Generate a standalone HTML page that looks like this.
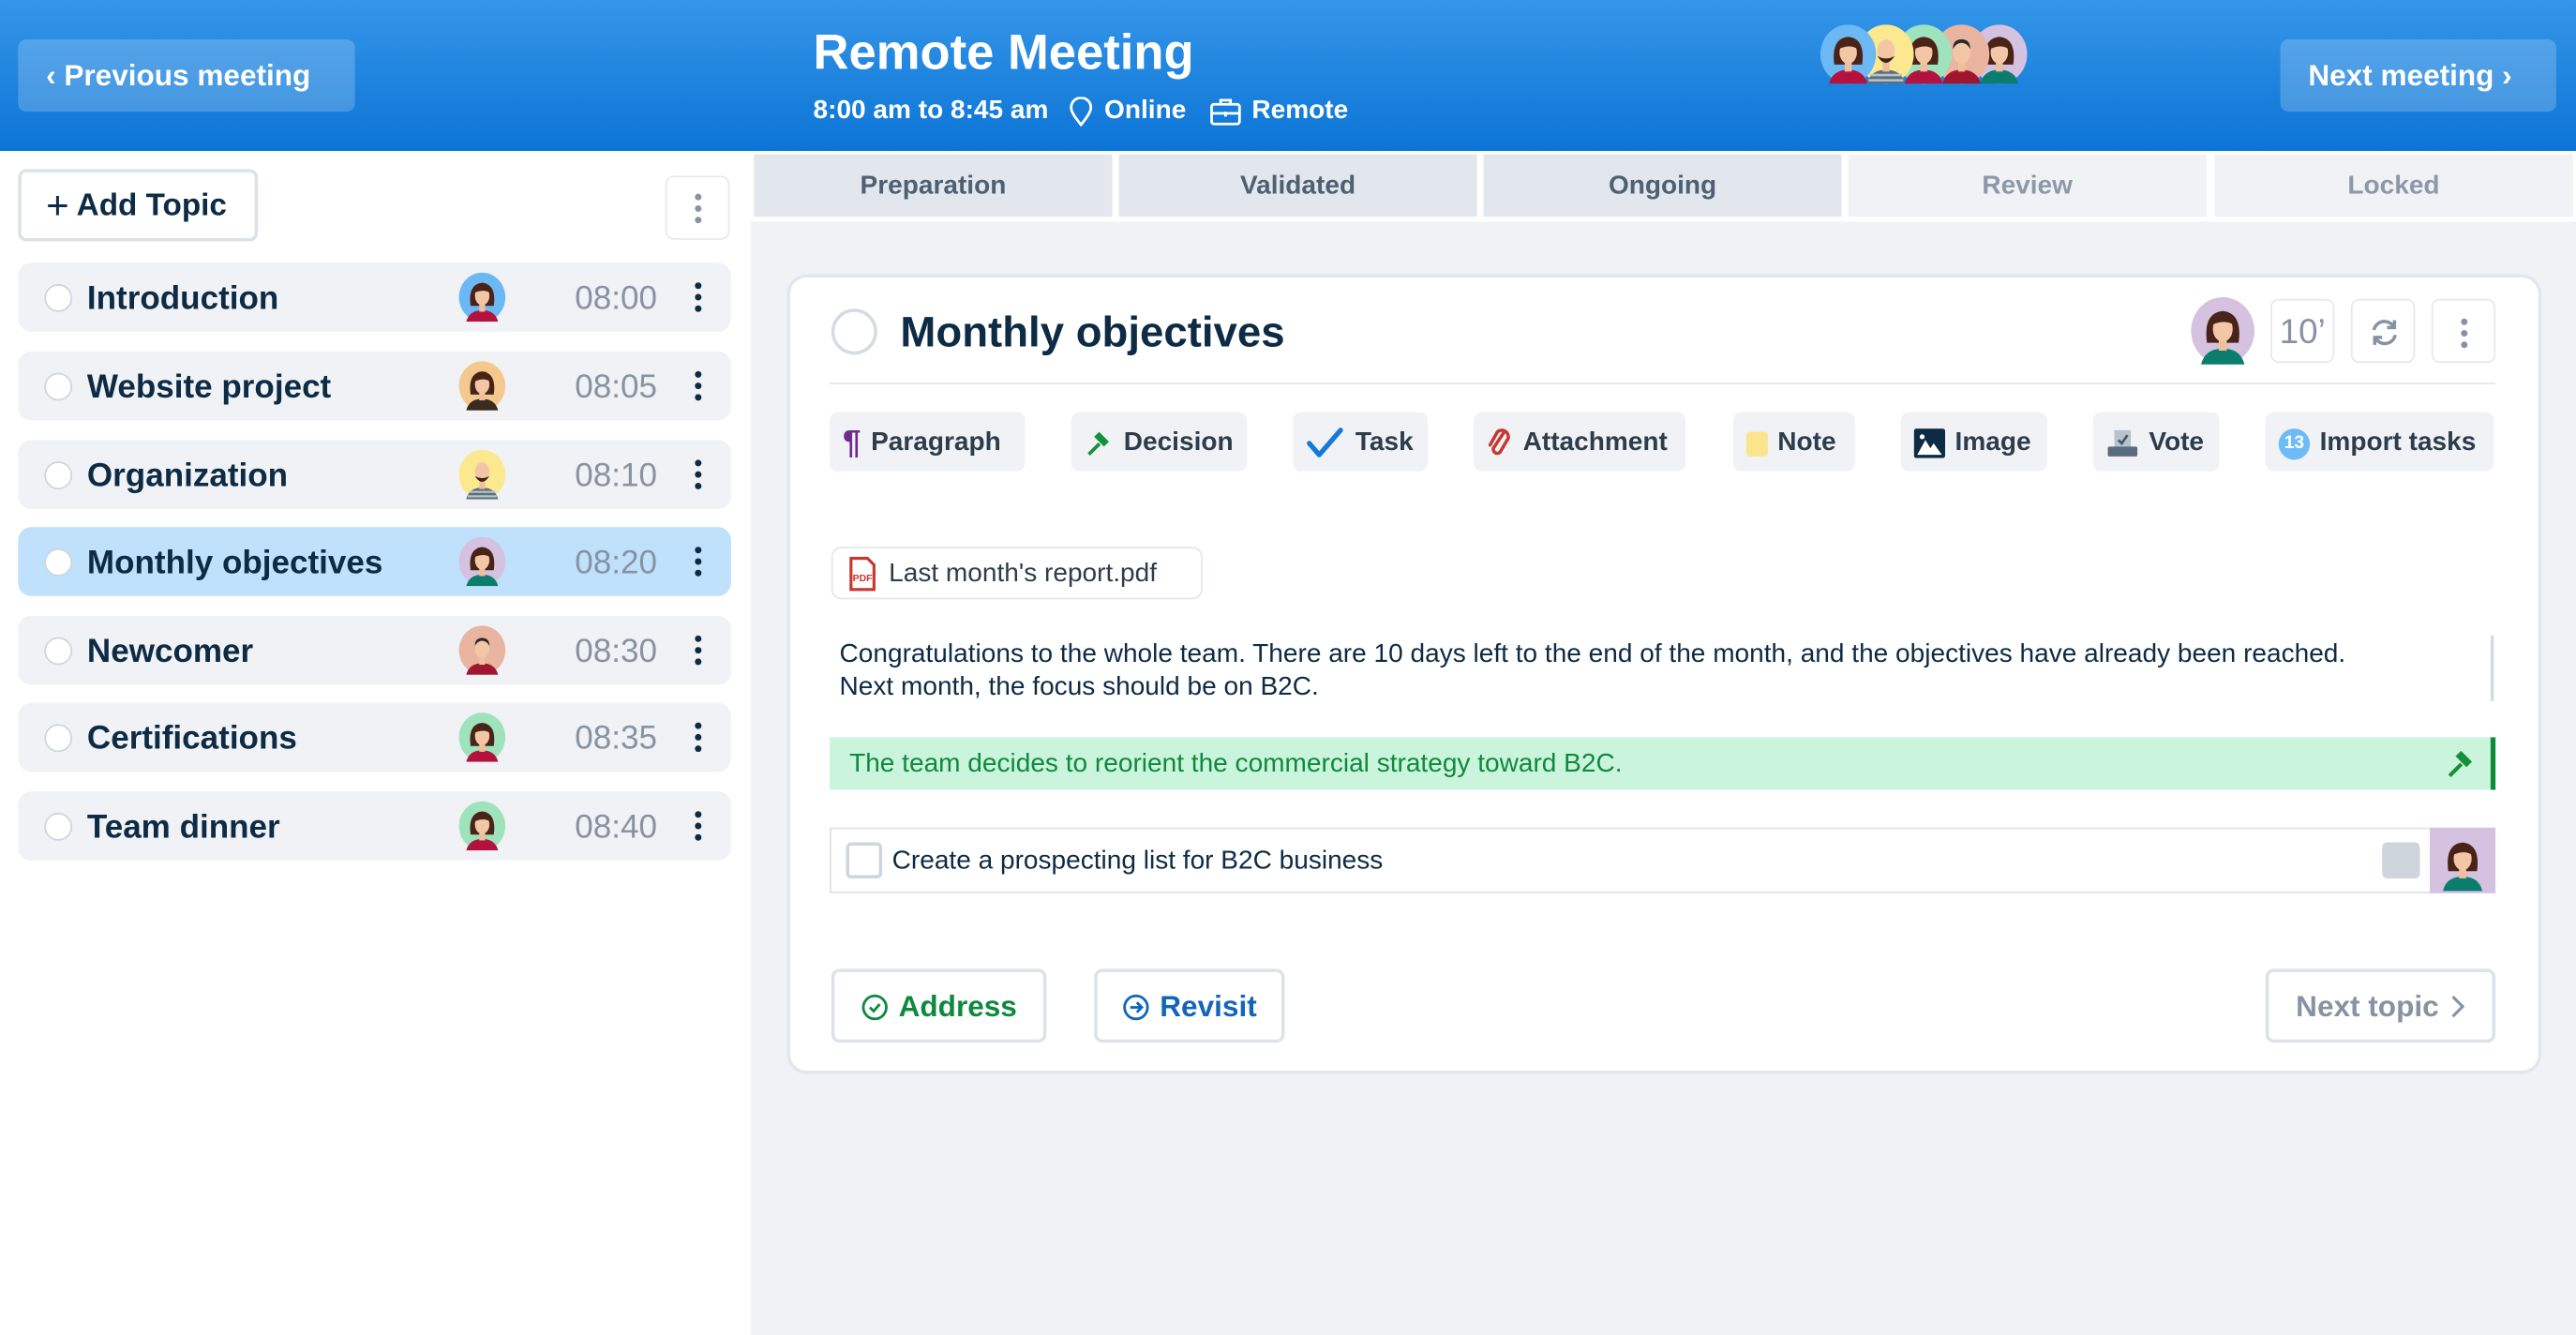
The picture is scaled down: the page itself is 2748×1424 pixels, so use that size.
<!DOCTYPE html>
<html><head><meta charset="utf-8"><style>
*{box-sizing:border-box;margin:0;padding:0}
html,body{width:2748px;height:1424px;overflow:hidden;background:#fff}
body{font-family:"Liberation Sans",Arial,sans-serif}
#w{position:absolute;left:0;top:0;width:1568px;height:813px;transform:scale(1.75255,1.7515);transform-origin:0 0;background:#fff}
.a{position:absolute}
.hdr{left:0;top:0;width:1568px;height:92px;background:linear-gradient(#3596e8,#0b74d6)}
.hb{top:24px;height:44px;background:rgba(255,255,255,.2);border-radius:5px;color:#fff;font-weight:bold;font-size:18px;line-height:45px}
.side{left:0;top:92px;width:457px;height:721px;background:#fff}
.main{left:457px;top:92px;width:1111px;height:721px;background:#f0f2f5}
.row{left:11px;width:434px;height:42px;background:#f0f2f5;border-radius:8px}
.row .c{position:absolute;left:16px;top:13px;width:17px;height:17px;border-radius:50%;border:1.5px solid #cfd5dd;background:#fff}
.row .t{position:absolute;left:42px;top:1px;line-height:42px;font-size:20px;font-weight:bold;color:#0d2b45}
.row .tm{position:absolute;right:45px;top:1px;line-height:42px;font-size:20px;color:#8793a3}
.row svg.av{position:absolute;left:268px;top:6px;width:29px;height:30px}
.dots{position:absolute;width:4px}
.dots i{display:block;width:4px;height:4px;border-radius:50%;background:#0d2b45;margin-bottom:3px}
.row .dots{left:412px;top:12px}
.tab{top:94px;height:38px;line-height:39px;text-align:center;font-size:16px;font-weight:bold}
.card{left:479px;top:167px;width:1068px;height:487px;background:#fff;border:2px solid #e2e7ee;border-radius:12px}
.tb{top:251px;height:36px;background:#f0f2f5;border-radius:5px;font-size:16px;font-weight:bold;color:#2e3c4b;line-height:36px;display:flex;align-items:center;padding-left:8px;padding-top:2px;gap:6px}
.sq{top:182px;width:39px;height:39px;border:1px solid #e5e9ee;border-radius:5px;background:#fff;color:#8793a3}
.btn{top:590px;height:45px;border:2px solid #dde2e8;border-radius:5px;background:#fff;font-size:18px;font-weight:bold;line-height:41px;display:flex;align-items:center;justify-content:center;gap:6px;padding-top:1px}
</style></head><body>
<svg width="0" height="0" style="position:absolute">
<defs>
<symbol id="fem" viewBox="0 0 32 32"><path d="M8 22 Q6 7 16 6 Q26 7 24 22Z" fill="#4a2318"/><path d="M5 33 Q7 25 16 25 Q25 25 27 33Z" fill="currentColor"/><rect x="14" y="20" width="4" height="6" fill="#f0bf9c"/><ellipse cx="16" cy="15" rx="5" ry="6.5" fill="#f3c7a5"/><path d="M10.5 13 Q12 7 16 7.5 Q21 8 21.5 13 Q17 10 10.5 13Z" fill="#4a2318"/></symbol>
<symbol id="mal" viewBox="0 0 32 32"><path d="M5 33 Q7 25 16 25 Q25 25 27 33Z" fill="currentColor"/><rect x="14" y="20" width="4" height="6" fill="#f0bf9c"/><ellipse cx="16" cy="15" rx="5" ry="6.5" fill="#f3c7a5"/><path d="M11 13 Q11 7.5 16 7.5 Q21 7.5 21 13 Q19 9.5 16 9.5 Q13 9.5 11 13Z" fill="#2a2a2a"/></symbol>
<symbol id="bald" viewBox="0 0 32 32"><path d="M5 33 Q7 25 16 25 Q25 25 27 33Z" fill="#5c6f7a"/><path d="M7 28 H25 M6 31 H26" stroke="#b8c4cc" stroke-width="1.4"/><rect x="14" y="20" width="4" height="6" fill="#f0bf9c"/><ellipse cx="16" cy="14" rx="5" ry="6.5" fill="#f3c7a5"/><path d="M11 17 Q16 25 21 17 Q16 20 11 17Z" fill="#3a2418"/></symbol>
</defs></svg>
<div id="w">
<div class="a hdr"></div>
<div class="a hb" style="left:11px;width:205px;padding-left:17px">&#8249;&nbsp;Previous meeting</div>
<div class="a" style="left:495px;top:16px;color:#fff;font-size:30px;font-weight:bold">Remote Meeting</div>
<div class="a" style="left:495px;top:59px;color:#fff;font-size:16px;font-weight:bold;display:flex;align-items:center;gap:6px">8:00 am to 8:45 am
<svg width="16" height="18" viewBox="0 0 16 18" style="margin-left:6px"><path d="M8 17 C4 12 2 9 2 6.5 A6 6 0 0 1 14 6.5 C14 9 12 12 8 17Z" fill="none" stroke="#fff" stroke-width="1.6"/></svg>Online
<svg width="20" height="18" viewBox="0 0 20 18" style="margin-left:8px"><rect x="1.5" y="4.5" width="17" height="12" rx="1.5" fill="none" stroke="#fff" stroke-width="1.6"/><path d="M7 4.5V2h6v2.5M1.5 10h17M10 9v3" stroke="#fff" stroke-width="1.6" fill="none"/></svg>Remote</div>
<div class="a" style="left:1108px;top:15px;width:130px;height:36px">
<svg class="a" style="left:0;top:0;z-index:5" width="34" height="36" viewBox="0 0 32 34"><ellipse cx="16" cy="17" rx="16" ry="17" fill="#6cb8f5"/><use href="#fem" width="32" height="34" style="color:#b3123f"/></svg>
<svg class="a" style="left:23px;top:0;z-index:4" width="34" height="36" viewBox="0 0 32 34"><ellipse cx="16" cy="17" rx="16" ry="17" fill="#fbe88f"/><use href="#bald" width="32" height="34"/></svg>
<svg class="a" style="left:46px;top:0;z-index:3" width="34" height="36" viewBox="0 0 32 34"><ellipse cx="16" cy="17" rx="16" ry="17" fill="#9fe3bd"/><use href="#fem" width="32" height="34" style="color:#b3123f"/></svg>
<svg class="a" style="left:69px;top:0;z-index:2" width="34" height="36" viewBox="0 0 32 34"><ellipse cx="16" cy="17" rx="16" ry="17" fill="#e9b5a1"/><use href="#mal" width="32" height="34" style="color:#a0162e"/></svg>
<svg class="a" style="left:92px;top:0;z-index:1" width="34" height="36" viewBox="0 0 32 34"><ellipse cx="16" cy="17" rx="16" ry="17" fill="#d5c1e0"/><use href="#fem" width="32" height="34" style="color:#0b7d6c"/></svg>
</div>
<div class="a hb" style="left:1388px;width:168px;padding-left:17px">Next meeting&nbsp;&#8250;</div>

<div class="a side"></div>
<div class="a" style="left:11px;top:103px;width:146px;height:44px;border:2px solid #dde2e8;border-radius:5px;font-size:19px;font-weight:bold;color:#0d2b45;line-height:42px;padding-left:15px"><span style="font-size:24px;font-weight:normal;vertical-align:-2px">+</span> Add Topic</div>
<div class="a" style="left:405px;top:107px;width:39px;height:39px;border:1px solid #e5e9ee;border-radius:5px"><div class="dots" style="left:17px;top:10px"><i style="background:#8793a3"></i><i style="background:#8793a3"></i><i style="background:#8793a3"></i></div></div>

<div class="a row" style="top:160px"><div class="c"></div><div class="t">Introduction</div><svg class="av" viewBox="0 0 32 34"><ellipse cx="16" cy="17" rx="16" ry="17" fill="#6cb8f5"/><use href="#fem" width="32" height="34" style="color:#b3123f"/></svg><div class="tm">08:00</div><div class="dots"><i></i><i></i><i></i></div></div>
<div class="a row" style="top:214px"><div class="c"></div><div class="t">Website project</div><svg class="av" viewBox="0 0 32 34"><ellipse cx="16" cy="17" rx="16" ry="17" fill="#f5c98e"/><use href="#fem" width="32" height="34" style="color:#3b2a22"/></svg><div class="tm">08:05</div><div class="dots"><i></i><i></i><i></i></div></div>
<div class="a row" style="top:268px"><div class="c"></div><div class="t">Organization</div><svg class="av" viewBox="0 0 32 34"><ellipse cx="16" cy="17" rx="16" ry="17" fill="#fbe88f"/><use href="#bald" width="32" height="34"/></svg><div class="tm">08:10</div><div class="dots"><i></i><i></i><i></i></div></div>
<div class="a row" style="top:321px;background:#bfe1fc"><div class="c"></div><div class="t">Monthly objectives</div><svg class="av" viewBox="0 0 32 34"><ellipse cx="16" cy="17" rx="16" ry="17" fill="#d5c1e0"/><use href="#fem" width="32" height="34" style="color:#0b7d6c"/></svg><div class="tm">08:20</div><div class="dots"><i></i><i></i><i></i></div></div>
<div class="a row" style="top:375px"><div class="c"></div><div class="t">Newcomer</div><svg class="av" viewBox="0 0 32 34"><ellipse cx="16" cy="17" rx="16" ry="17" fill="#e9b5a1"/><use href="#mal" width="32" height="34" style="color:#a0162e"/></svg><div class="tm">08:30</div><div class="dots"><i></i><i></i><i></i></div></div>
<div class="a row" style="top:428px"><div class="c"></div><div class="t">Certifications</div><svg class="av" viewBox="0 0 32 34"><ellipse cx="16" cy="17" rx="16" ry="17" fill="#9fe3bd"/><use href="#fem" width="32" height="34" style="color:#b3123f"/></svg><div class="tm">08:35</div><div class="dots"><i></i><i></i><i></i></div></div>
<div class="a row" style="top:482px"><div class="c"></div><div class="t">Team dinner</div><svg class="av" viewBox="0 0 32 34"><ellipse cx="16" cy="17" rx="16" ry="17" fill="#9fe3bd"/><use href="#fem" width="32" height="34" style="color:#b3123f"/></svg><div class="tm">08:40</div><div class="dots"><i></i><i></i><i></i></div></div>

<div class="a main"></div>
<div class="a" style="left:457px;top:92px;width:1111px;height:43px;background:#fff"></div>
<div class="a tab" style="left:459px;width:218px;background:#e2e7ee;color:#4f6070">Preparation</div>
<div class="a tab" style="left:681px;width:218px;background:#e2e7ee;color:#4f6070">Validated</div>
<div class="a tab" style="left:903px;width:218px;background:#e2e7ee;color:#4f6070">Ongoing</div>
<div class="a tab" style="left:1125px;width:218px;background:#f0f2f5;color:#8d99a8">Review</div>
<div class="a tab" style="left:1348px;width:218px;background:#f0f2f5;color:#8d99a8">Locked</div>

<div class="a card"></div>
<div class="a" style="left:506px;top:188px;width:28px;height:28px;border-radius:50%;border:2px solid #d5dbe2"></div>
<div class="a" style="left:548px;top:187px;font-size:26px;font-weight:bold;color:#0d2b45">Monthly objectives</div>
<svg class="a" style="left:1333px;top:181px" width="40" height="41" viewBox="0 0 32 34"><ellipse cx="16" cy="17" rx="16" ry="17" fill="#d5c1e0"/><use href="#fem" width="32" height="34" style="color:#0b7d6c"/></svg>
<div class="a sq" style="left:1382px;font-size:21px;line-height:39px;text-align:center">10&#8217;</div>
<div class="a sq" style="left:1431px"><svg width="39" height="39" viewBox="0 0 39 39"><path d="M13 18 A6.5 6.5 0 0 1 25 16 M26 21 A6.5 6.5 0 0 1 14 23" fill="none" stroke="#8793a3" stroke-width="2"/><path d="M25.5 12 V16.5 H21 M13.5 27 V22.5 H18" fill="none" stroke="#8793a3" stroke-width="2"/></svg></div>
<div class="a sq" style="left:1480px"><div class="dots" style="left:17px;top:11px"><i style="background:#8793a3"></i><i style="background:#8793a3"></i><i style="background:#8793a3"></i></div></div>
<div class="a" style="left:505px;top:233px;width:1014px;height:1px;background:#e2e7ee"></div>

<div class="a tb" style="left:505px;width:119px"><span style="color:#6f2a8c;font-size:20px">&#182;</span>Paragraph</div>
<div class="a tb" style="left:652px;width:107px"><svg width="18" height="18" viewBox="0 0 18 18"><path d="M9 2 L15 8 L12 11 L6 5Z" fill="#14913b"/><path d="M8.5 8.5 L2 15 L3.5 16.5 L10 10" fill="#14913b"/></svg>Decision</div>
<div class="a tb" style="left:787px;width:82px"><svg width="24" height="20" viewBox="0 0 24 20"><path d="M2 10 L8 17 L21 2" fill="none" stroke="#1579d8" stroke-width="3" stroke-linecap="round" stroke-linejoin="round"/></svg>Task</div>
<div class="a tb" style="left:897px;width:129px"><svg width="16" height="20" viewBox="0 0 16 20"><path d="M10 4 L4 13 A2.5 2.5 0 0 0 8 15.5 L13 7 A4 4 0 0 0 6.5 3 L2 11" fill="none" stroke="#c6372f" stroke-width="2" stroke-linecap="round"/></svg>Attachment</div>
<div class="a tb" style="left:1055px;width:74px"><span style="display:inline-block;width:13px;height:15px;background:#fbe48c;border-radius:2px"></span>Note</div>
<div class="a tb" style="left:1157px;width:89px"><svg width="19" height="18" viewBox="0 0 19 18"><rect width="19" height="18" rx="1.5" fill="#0d2b45"/><path d="M2 16 L7 7 L10 12 L12 9 L17 16Z" fill="#fff"/><circle cx="5" cy="5" r="1.5" fill="#fff"/></svg>Image</div>
<div class="a tb" style="left:1274px;width:77px"><svg width="20" height="18" viewBox="0 0 20 18"><rect x="5" y="1" width="10" height="11" fill="#b7c2cc"/><path d="M7.5 7 L9.5 9 L13 4" stroke="#44586b" stroke-width="1.5" fill="none"/><rect x="1" y="11" width="18" height="6" rx="1" fill="#5a6c7e"/></svg>Vote</div>
<div class="a tb" style="left:1379px;width:139px"><span style="display:inline-block;width:19px;height:19px;border-radius:50%;background:#6ebcf7;color:#fff;font-size:11px;line-height:19px;text-align:center">13</span>Import tasks</div>

<div class="a" style="left:506px;top:333px;width:226px;height:32px;border:1px solid #e2e7ee;border-radius:6px;font-size:16px;color:#2e3c4b;line-height:32px;padding-left:34px">Last month's report.pdf
<svg class="a" style="left:9px;top:5px" width="18" height="21" viewBox="0 0 18 21"><path d="M2 1 H12 L16 5 V20 H2Z" fill="#fff" stroke="#c6372f" stroke-width="1.8"/><text x="3" y="15" font-size="6" font-weight="bold" fill="#c6372f" font-family="Liberation Sans">PDF</text></svg></div>

<div class="a" style="left:511px;top:389px;width:960px;font-size:16px;line-height:20px;color:#0d2b45">Congratulations to the whole team. There are 10 days left to the end of the month, and the objectives have already been reached.<br>Next month, the focus should be on B2C.</div>
<div class="a" style="left:1516px;top:387px;width:2px;height:40px;background:#d5dbe2"></div>

<div class="a" style="left:505px;top:449px;width:1014px;height:32px;background:#cbf4dd;border-right:3px solid #0e8a3c;font-size:16px;line-height:34px;color:#0e8a3c;padding-left:12px">The team decides to reorient the commercial strategy toward B2C.
<svg class="a" style="right:8px;top:6px" width="20" height="20" viewBox="0 0 18 18"><path d="M9 2 L15 8 L12 11 L6 5Z" fill="#14913b"/><path d="M8.5 8.5 L2 15 L3.5 16.5 L10 10" fill="#14913b"/></svg></div>

<div class="a" style="left:505px;top:504px;width:1014px;height:40px;border:1px solid #dde2e8;background:#fff"></div>
<div class="a" style="left:515px;top:513px;width:22px;height:22px;border:2px solid #cfd5dd;border-radius:3px"></div>
<div class="a" style="left:543px;top:505px;line-height:40px;font-size:16px;color:#0d2b45">Create a prospecting list for B2C business</div>
<div class="a" style="left:1450px;top:513px;width:23px;height:22px;background:#cfd5dd;border-radius:3px"></div>
<svg class="a" style="left:1479px;top:504px" width="40" height="40" viewBox="0 0 32 32"><rect width="32" height="32" fill="#d5c1e0"/><use href="#fem" x="2" y="0" width="28" height="32" style="color:#0b7d6c"/></svg>

<div class="a btn" style="left:506px;width:131px;color:#0e8a3c"><svg width="17" height="17" viewBox="0 0 17 17"><circle cx="8.5" cy="8.5" r="7" fill="none" stroke="#0e8a3c" stroke-width="1.6"/><path d="M5.5 8.5 L7.8 10.8 L11.5 6.5" fill="none" stroke="#0e8a3c" stroke-width="1.6"/></svg>Address</div>
<div class="a btn" style="left:666px;width:116px;color:#1465b8"><svg width="17" height="17" viewBox="0 0 17 17"><circle cx="8.5" cy="8.5" r="7" fill="none" stroke="#1465b8" stroke-width="1.6"/><path d="M5 8.5 H12 M9 5.5 L12 8.5 L9 11.5" fill="none" stroke="#1465b8" stroke-width="1.6"/></svg>Revisit</div>
<div class="a btn" style="left:1379px;width:140px;color:#8793a3;font-weight:bold">Next topic<svg width="10" height="16" viewBox="0 0 10 16"><path d="M2 2 L8 8 L2 14" fill="none" stroke="#8793a3" stroke-width="1.8"/></svg></div>
</div>
</body></html>
